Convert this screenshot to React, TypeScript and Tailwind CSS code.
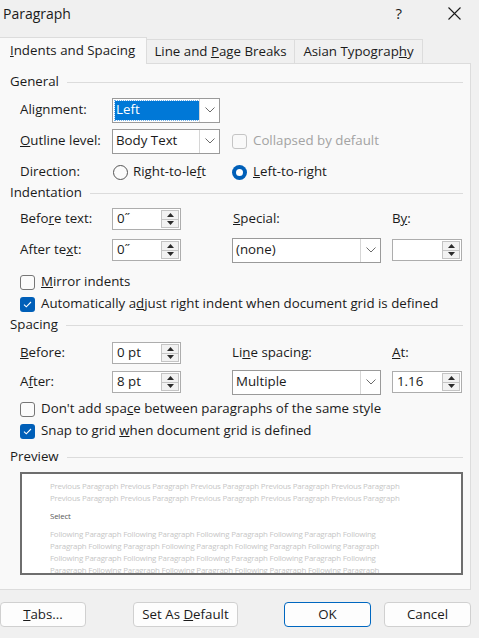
import React from "react";

const FONT = { fontFamily: '"Open Sans", "Noto Sans", "Liberation Sans", sans-serif' };

const Chevron = () => (
  <svg width="10" height="6" viewBox="0 0 10 6" fill="none">
    <path d="M0.5 0.5 L5 5 L9.5 0.5" stroke="#6b6b6b" strokeWidth="1" />
  </svg>
);

const SectionHeader = ({ title }: { title: string }) => (
  <div className="flex items-center h-[16px] pr-[7px]">
    <span className="text-[13.3px] leading-none text-[#1b1b1b]">{title}</span>
    <div className="flex-1 h-px bg-[#dcdcdc] ml-[8px]" />
  </div>
);

type SelectProps = { value: string; width: string; highlight?: boolean };

const Select = ({ value, width, highlight }: SelectProps) => (
  <div className={`${width} h-[25px] flex border border-[#9a9a9a] bg-white`}>
    <div className="flex-1 flex items-center pl-[2px]">
      {highlight ? (
        <span className="bg-[#0078d7] text-white w-full h-[19px] flex items-center pl-[1px] text-[13.3px] outline-1 outline-dotted outline-[#6fb0ea]">
          {value}
        </span>
      ) : (
        <span className="text-[13.3px] pl-[1px] text-[#1b1b1b]">{value}</span>
      )}
    </div>
    <div className="w-[20px] border-l border-[#d6d6d6] flex items-center justify-center">
      <Chevron />
    </div>
  </div>
);

const Spin = ({ value, width }: { value: string; width: string }) => (
  <div className={`${width} h-[22px] flex border border-[#adadad] bg-white`}>
    <div className="flex-1 flex items-center pl-[4px] text-[13.3px] text-[#1b1b1b]">{value}</div>
    <div className="w-[18px] m-[1px] flex flex-col border border-[#c4c4c4] bg-[#f2f2f2]">
      <div className="flex-1 flex items-center justify-center border-b border-[#c4c4c4]">
        <svg width="7" height="4" viewBox="0 0 7 4">
          <path d="M0 4 L3.5 0 L7 4 Z" fill="#2b2b2b" />
        </svg>
      </div>
      <div className="flex-1 flex items-center justify-center">
        <svg width="7" height="4" viewBox="0 0 7 4">
          <path d="M0 0 L3.5 4 L7 0 Z" fill="#2b2b2b" />
        </svg>
      </div>
    </div>
  </div>
);

const Checkbox = ({ checked, disabled }: { checked?: boolean; disabled?: boolean }) =>
  checked ? (
    <div className="w-[15px] h-[15px] rounded-[3px] bg-[#005fb8] flex items-center justify-center">
      <svg width="9" height="7" viewBox="0 0 9 7" fill="none">
        <path d="M1 3.6 L3.3 5.8 L8 1" stroke="#ffffff" strokeWidth="1.1" />
      </svg>
    </div>
  ) : (
    <div
      className={`w-[15px] h-[15px] rounded-[3px] border ${
        disabled ? "border-[#c5c5c5] bg-[#f9f9f9]" : "border-[#767676] bg-[#fbfbfb]"
      }`}
    />
  );

const Radio = ({ checked }: { checked?: boolean }) =>
  checked ? (
    <div className="w-[15px] h-[15px] rounded-full bg-[#005fb8] flex items-center justify-center">
      <div className="w-[7px] h-[7px] rounded-full bg-white" />
    </div>
  ) : (
    <div className="w-[15px] h-[15px] rounded-full border border-[#555555] bg-[#fbfbfb]" />
  );

const CheckRow = ({
  checked,
  children,
  className = "",
}: {
  checked?: boolean;
  children: React.ReactNode;
  className?: string;
}) => (
  <div className={`flex items-center h-[20px] pl-[20px] ${className}`}>
    <Checkbox checked={checked} />
    <span className="ml-[6px] text-[13.3px] text-[#1b1b1b]">{children}</span>
  </div>
);

const Label = ({ children }: { children: React.ReactNode }) => (
  <span className="w-[92px] pl-[20px] text-[13.3px] text-[#1b1b1b] shrink-0 whitespace-nowrap">
    {children}
  </span>
);

const Button = ({
  children,
  width,
  primary,
}: {
  children: React.ReactNode;
  width: string;
  primary?: boolean;
}) => (
  <div
    className={`${width} h-[25px] rounded-[4px] flex items-center justify-center text-[13.3px] text-[#1b1b1b] bg-[#fdfdfd] ${
      primary ? "border-[1.5px] border-[#0067c0]" : "border border-[#d0d0d0]"
    }`}
  >
    <span>{children}</span>
  </div>
);

const prevLine =
  "Previous Paragraph Previous Paragraph Previous Paragraph Previous Paragraph Previous Paragraph";
const followA =
  "Following Paragraph Following Paragraph Following Paragraph Following Paragraph Following";
const followB =
  "Paragraph Following Paragraph Following Paragraph Following Paragraph Following Paragraph";

const Preview = () => (
  <div className="ml-[20px] mr-[7px] h-[103px] bg-white border-2 border-[#6e6e6e] overflow-hidden pl-[28px] pt-[6px]">
    <div className="text-[7.9px] leading-[12px] text-[#c6c6c6] whitespace-nowrap tracking-[-0.2px]">
      <div>{prevLine}</div>
      <div>{prevLine}</div>
      <div className="text-[#5a5a5a] mt-[6px] mb-[6px]">Select</div>
      <div>{followA}</div>
      <div>{followB}</div>
      <div>{followA}</div>
      <div>{followB}</div>
    </div>
  </div>
);

export default function App() {
  return (
    <div className="w-[479px] h-[638px] bg-[#f0f0f0] overflow-hidden text-[#1b1b1b]" style={FONT}>
      {/* title bar */}
      <div className="h-[26px] flex items-center pl-[3px] pr-[18px]">
        <span className="text-[14px] text-[#1b1b1b]">Paragraph</span>
        <span className="ml-auto text-[15px] mr-[46px]">?</span>
        <svg width="13" height="13" viewBox="0 0 13 13">
          <path d="M0.5 0.5 L12.5 12.5 M12.5 0.5 L0.5 12.5" stroke="#1b1b1b" strokeWidth="1.1" />
        </svg>
      </div>

      {/* tabs */}
      <div className="mt-[11px] h-[26px] flex items-end">
        <div className="relative z-10 -mb-px h-[27px] w-[147px] bg-[#f9f9f9] border border-b-0 border-[#dcdcdc] border-l-0 flex items-center pl-[10px] text-[13.3px]">
          <span>
            <u>I</u>ndents and Spacing
          </span>
        </div>
        <div className="h-[24px] w-[148px] bg-[#f0f0f0] border-t border-r border-[#dcdcdc] flex items-center justify-center text-[13.3px]">
          <span>
            Line and <u>P</u>age Breaks
          </span>
        </div>
        <div className="h-[24px] w-[128px] bg-[#f0f0f0] border-t border-r border-[#dcdcdc] flex items-center justify-center text-[13.3px]">
          <span>
            Asian Typograp<u>h</u>y
          </span>
        </div>
      </div>

      {/* panel */}
      <div className="w-[471px] h-[527px] bg-[#f9f9f9] border border-l-0 border-[#dcdcdc] pt-[10px]">
        <div className="pl-[10px]">
          <SectionHeader title="General" />
        </div>

        <div className="mt-[7px] flex items-center h-[26px]">
          <Label>
            Ali<u>g</u>nment:
          </Label>
          <div className="ml-[20px]">
            <Select value="Left" width="w-[108px]" highlight />
          </div>
        </div>

        <div className="mt-[5px] flex items-center h-[26px]">
          <Label>
            <u>O</u>utline level:
          </Label>
          <div className="ml-[20px]">
            <Select value="Body Text" width="w-[108px]" />
          </div>
          <div className="ml-[12px] flex items-center">
            <Checkbox disabled />
            <span className="ml-[6px] text-[13.3px] text-[#a3a3a3]">Collapsed by default</span>
          </div>
        </div>

        <div className="mt-[8px] flex items-center h-[20px]">
          <Label>Direction:</Label>
          <div className="ml-[21px] flex items-center w-[119px]">
            <Radio />
            <span className="ml-[5px] text-[13.3px]">
              Right-to-le<u>f</u>t
            </span>
          </div>
          <div className="flex items-center">
            <Radio checked />
            <span className="ml-[6px] text-[13.3px]">
              <u>L</u>eft-to-right
            </span>
          </div>
        </div>

        <div className="mt-[3px] pl-[10px]">
          <SectionHeader title="Indentation" />
        </div>

        <div className="mt-[7px] flex items-center h-[22px]">
          <Label>
            Befo<u>r</u>e text:
          </Label>
          <div className="ml-[20px]">
            <Spin value={"0\u02DD"} width="w-[69px]" />
          </div>
          <span className="ml-[52px] w-[159px] text-[13.3px]">
            <u>S</u>pecial:
          </span>
          <span className="text-[13.3px]">
            B<u>y</u>:
          </span>
        </div>

        <div className="mt-[8px] flex items-center h-[24px]">
          <Label>
            After te<u>x</u>t:
          </Label>
          <div className="ml-[20px]">
            <Spin value={"0\u02DD"} width="w-[69px]" />
          </div>
          <div className="ml-[51px]">
            <Select value="(none)" width="w-[149px]" />
          </div>
          <div className="ml-[11px]">
            <Spin value="" width="w-[70px]" />
          </div>
        </div>

        <CheckRow className="mt-[10px]">
          <u>M</u>irror indents
        </CheckRow>
        <CheckRow checked className="mt-[2px]">
          Automatically a<u>d</u>just right indent when document grid is defined
        </CheckRow>

        <div className="mt-[3px] pl-[10px]">
          <SectionHeader title="Spacing" />
        </div>

        <div className="mt-[9px] flex items-center h-[22px]">
          <Label>
            <u>B</u>efore:
          </Label>
          <div className="ml-[20px]">
            <Spin value="0 pt" width="w-[69px]" />
          </div>
          <span className="ml-[51px] w-[160px] text-[13.3px]">
            Li<u>n</u>e spacing:
          </span>
          <span className="text-[13.3px]">
            <u>A</u>t:
          </span>
        </div>

        <div className="mt-[6px] flex items-center h-[24px]">
          <Label>
            A<u>f</u>ter:
          </Label>
          <div className="ml-[20px]">
            <Spin value="8 pt" width="w-[69px]" />
          </div>
          <div className="ml-[51px]">
            <Select value="Multiple" width="w-[149px]" />
          </div>
          <div className="ml-[11px]">
            <Spin value="1.16" width="w-[70px]" />
          </div>
        </div>

        <CheckRow className="mt-[5px]">
          Don't add spa<u>c</u>e between paragraphs of the same style
        </CheckRow>
        <CheckRow checked className="mt-[2px]">
          Snap to grid <u>w</u>hen document grid is defined
        </CheckRow>

        <div className="mt-[8px] pl-[10px]">
          <SectionHeader title="Preview" />
        </div>

        <div className="mt-[7px]">
          <Preview />
        </div>
      </div>

      {/* buttons */}
      <div className="mt-[12px] flex items-center">
        <Button width="w-[86px]">
          <u>T</u>abs...
        </Button>
        <div className="ml-[47px]">
          <Button width="w-[105px]">
            Set As <u>D</u>efault
          </Button>
        </div>
        <div className="ml-[46px]">
          <Button width="w-[87px]" primary>
            OK
          </Button>
        </div>
        <div className="ml-[13px]">
          <Button width="w-[87px]">Cancel</Button>
        </div>
      </div>
    </div>
  );
}
